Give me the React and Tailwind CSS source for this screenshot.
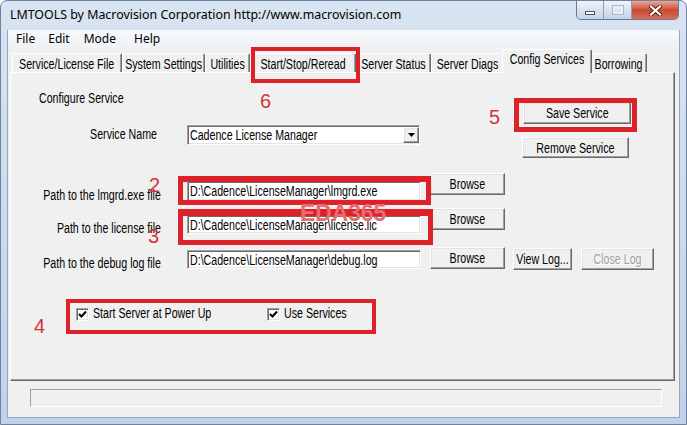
import React from "react";

const ui = "font-['Liberation_Sans',Arial,sans-serif] text-[14px] leading-[16px] text-black";
const raised =
  "flex items-center justify-center bg-[#f0f0f0] border border-t-white border-l-white border-r-[#696969] border-b-[#696969] shadow-[inset_-1px_-1px_0_#a0a0a0,inset_1px_1px_0_#e3e3e3]";
const sunken =
  "bg-white border border-t-[#a0a0a0] border-l-[#a0a0a0] border-r-white border-b-white shadow-[inset_1px_1px_0_#696969,inset_-1px_-1px_0_#e3e3e3]";

// the dialog font is a narrow one; squeeze Liberation Sans to its width
function T({ children, o = "origin-left", c = "" }) {
  return <span className={`inline-block whitespace-nowrap scale-x-[0.76] ${o} ${c}`}>{children}</span>;
}

function Tab({ w, label, selected }) {
  if (selected) {
    return (
      <div
        className={`relative z-10 -mx-[2px] h-[24px] -mb-[1px] bg-[#f0f0f0] border border-b-0 border-t-white border-l-white border-r-[#696969] rounded-t-[2px] shadow-[inset_-1px_0_0_#a0a0a0] flex justify-center pt-[1px] ${w}`}
      >
        <T o="origin-center">{label}</T>
      </div>
    );
  }
  return (
    <div
      className={`h-[19px] bg-[#f0f0f0] border border-b-0 border-t-white border-l-white border-r-[#696969] rounded-t-[2px] shadow-[inset_-1px_0_0_#a0a0a0] flex justify-center pt-[2px] ${w}`}
    >
      <T o="origin-center">{label}</T>
    </div>
  );
}

function Check({ label, w }) {
  return (
    <div className={`flex items-start ${w}`}>
      <div className={`mt-[3px] w-[13px] h-[13px] ${sunken} flex items-center justify-center`}>
        <svg width="9" height="9" viewBox="0 0 9 9">
          <polyline points="1,4 3.5,6.5 8,1.5" fill="none" stroke="#000" strokeWidth="2" />
        </svg>
      </div>
      <span className="ml-[4px]">
        <T>{label}</T>
      </span>
    </div>
  );
}

function PathInput({ value, h }) {
  return (
    <div className={`ml-[26px] w-[234px] ${h} ${sunken} flex items-center pl-[2px] overflow-hidden`}>
      <T>{value}</T>
    </div>
  );
}

function Label({ w, mt, children }) {
  return (
    <div className={`flex justify-end ${w} ${mt}`}>
      <T o="origin-right">{children}</T>
    </div>
  );
}

function Btn({ cls, children }) {
  return (
    <div className={`${raised} ${cls}`}>
      <T o="origin-center">{children}</T>
    </div>
  );
}

export default function App() {
  return (
    <div className="relative w-[687px] h-[425px] overflow-hidden flex flex-col bg-gradient-to-b from-[#d9e4f2] to-[#c0d2ea] border border-[#6f819b] rounded-t-[7px]">
      {/* title bar */}
      <div className="h-[29px] flex items-start shrink-0">
        <span className="pl-[9px] pt-[6px] font-['Noto_Sans',sans-serif] text-[12.4px] leading-[16px] text-black whitespace-nowrap">
          LMTOOLS by Macrovision Corporation http://www.macrovision.com
        </span>
        <div className="ml-auto mr-[7px] flex h-[19px] rounded-b-[5px] overflow-hidden border border-t-0 border-[#6a7b94]">
          <div className="w-[27px] flex justify-center bg-gradient-to-b from-[#eef3fa] to-[#c6d4e6] border-r border-[#8d9db3]">
            <div className="mt-[10px] w-[10px] h-[4px] bg-white border border-[#45556c]" />
          </div>
          <div className="w-[28px] flex justify-center bg-gradient-to-b from-[#eef3fa] to-[#c6d4e6] border-r border-[#8d9db3]">
            <div className="mt-[5px] w-[10px] h-[8px] border-[2px] border-t-[3px] border-[#e8eef6] outline outline-1 outline-[#aab7c8]" />
          </div>
          <div className="w-[46px] flex items-center justify-center bg-gradient-to-b from-[#e9a797] via-[#c94a33] to-[#d86a55]">
            <svg width="13" height="11" viewBox="0 0 13 11">
              <path d="M2 1.5 L11 9.5 M11 1.5 L2 9.5" stroke="#5a1c12" strokeWidth="4" strokeLinecap="square" />
              <path d="M2 1.5 L11 9.5 M11 1.5 L2 9.5" stroke="#fff" strokeWidth="2.2" strokeLinecap="square" />
            </svg>
          </div>
        </div>
      </div>

      {/* client area */}
      <div className={`flex-1 mx-[6px] mb-[6px] bg-[#f0f0f0] border border-t-0 border-[#94a8c3] flex flex-col ${ui}`}>
        {/* menu */}
        <div className="h-[19px] shrink-0 flex items-start pt-[1px] pl-[8px] font-['Noto_Sans',sans-serif] text-[12px] leading-[16px] bg-gradient-to-b from-[#f7f9fc] to-[#eef1f5]">
          <span>File</span>
          <span className="ml-[13px]">Edit</span>
          <span className="ml-[14px]">Mode</span>
          <span className="ml-[18px]">Help</span>
        </div>

        {/* tabs */}
        <div className="h-[23px] shrink-0 flex items-end pl-[4px]">
          <Tab w="w-[110px]" label="Service/License File" />
          <Tab w="w-[83px]" label="System Settings" />
          <Tab w="w-[45px]" label="Utilities" />
          <Tab w="w-[106px]" label="Start/Stop/Reread" />
          <Tab w="w-[75px]" label="Server Status" />
          <Tab w="w-[73px]" label="Server Diags" />
          <Tab w="w-[90px]" label="Config Services" selected />
          <Tab w="w-[57px]" label="Borrowing" />
        </div>

        {/* panel */}
        <div className="ml-[2px] w-[665px] h-[309px] shrink-0 border border-t-white border-l-white border-r-[#696969] border-b-[#696969] shadow-[inset_-1px_-1px_0_#a0a0a0] flex flex-col">
          <div className="flex items-start">
            <div className="w-[409px] flex flex-col">
              <div className="mt-[17px] pl-[28px]">
                <T>Configure Service</T>
              </div>
              <div className="mt-[19px] flex items-start">
                <Label w="w-[146px]" mt="mt-[1px]">Service Name</Label>
                <div className={`ml-[30px] w-[233px] h-[20px] ${sunken} flex items-center pl-[2px]`}>
                  <span className="flex-1">
                    <T>Cadence License Manager</T>
                  </span>
                  <div className={`w-[16px] h-[16px] ${raised}`}>
                    <svg width="7" height="4" viewBox="0 0 7 4">
                      <path d="M0 0 H7 L3.5 4 Z" fill="#000" />
                    </svg>
                  </div>
                </div>
              </div>
            </div>
            <div className="ml-[102px] pt-[29px] flex flex-col">
              <Btn cls="ml-[1px] w-[108px] h-[22px]">Save Service</Btn>
              <Btn cls="mt-[13px] w-[107px] h-[21px]">Remove Service</Btn>
            </div>
          </div>

          <div className="mt-[15px] flex items-start">
            <Label w="w-[150px]" mt="mt-[14px]">Path to the lmgrd.exe file</Label>
            <div className="mt-[8px]">
              <PathInput h="h-[20px]" value={"D:\\Cadence\\LicenseManager\\lmgrd.exe"} />
            </div>
            <Btn cls="ml-[9px] w-[75px] h-[22px]">Browse</Btn>
          </div>

          <div className="mt-[5px] flex items-start">
            <Label w="w-[150px]" mt="mt-[12px]">Path to the license file</Label>
            <div className="mt-[7px]">
              <PathInput h="h-[19px]" value={"D:\\Cadence\\LicenseManager\\license.lic"} />
            </div>
            <Btn cls="ml-[9px] w-[75px] h-[22px]">Browse</Btn>
          </div>

          <div className="mt-[11px] flex items-start">
            <Label w="w-[150px]" mt="mt-[8px]">Path to the debug log file</Label>
            <div className="mt-[3px]">
              <PathInput h="h-[19px]" value={"D:\\Cadence\\LicenseManager\\debug.log"} />
            </div>
            <Btn cls="ml-[9px] w-[75px] h-[22px]">Browse</Btn>
            <Btn cls="ml-[8px] mt-[1px] w-[59px] h-[22px]">View Log...</Btn>
            <Btn cls="ml-[9px] mt-[1px] w-[73px] h-[22px] text-[#a0a0a0] [text-shadow:1px_1px_0_#fff]">Close Log</Btn>
          </div>

          <div className="mt-[34px] pl-[65px] flex">
            <Check w="w-[191px]" label="Start Server at Power Up" />
            <Check w="" label="Use Services" />
          </div>
        </div>

        {/* status bar */}
        <div className="mt-[8px] ml-[22px] w-[632px] h-[18px] border border-t-[#a0a0a0] border-l-[#a0a0a0] border-r-white border-b-white" />
      </div>

      {/* red annotations over the screenshot */}
      <div className="absolute left-[250px] top-[46px] w-[109px] h-[36px] border-[4px] border-[#de2129]" />
      <div className="absolute left-[513px] top-[97px] w-[123px] h-[34px] border-[5px] border-[#de2129]" />
      <div className="absolute left-[177px] top-[175px] w-[253px] h-[29px] border-[5px] border-t-[6px] border-[#de2129]" />
      <div className="absolute left-[177px] top-[208px] w-[255px] h-[36px] border-[5px] border-t-[7px] border-[#de2129]" />
      <div className="absolute left-[65px] top-[298px] w-[310px] h-[35px] border-[4px] border-[#de2129]" />

      <div className="absolute font-['Liberation_Sans',Arial,sans-serif] text-[20px] leading-none text-[#d3343a]">
        <span className="absolute left-[259px] top-[90px]">6</span>
        <span className="absolute left-[488px] top-[106px]">5</span>
        <span className="absolute left-[148px] top-[174px]">2</span>
        <span className="absolute left-[147px] top-[225px]">3</span>
        <span className="absolute left-[33px] top-[315px]">4</span>
      </div>
      <span className="absolute left-[299px] top-[200px] font-['Liberation_Sans',Arial,sans-serif] font-bold text-[24px] leading-none text-[#ea6a70] scale-x-[0.95] origin-left">
        EDA365
      </span>
    </div>
  );
}
